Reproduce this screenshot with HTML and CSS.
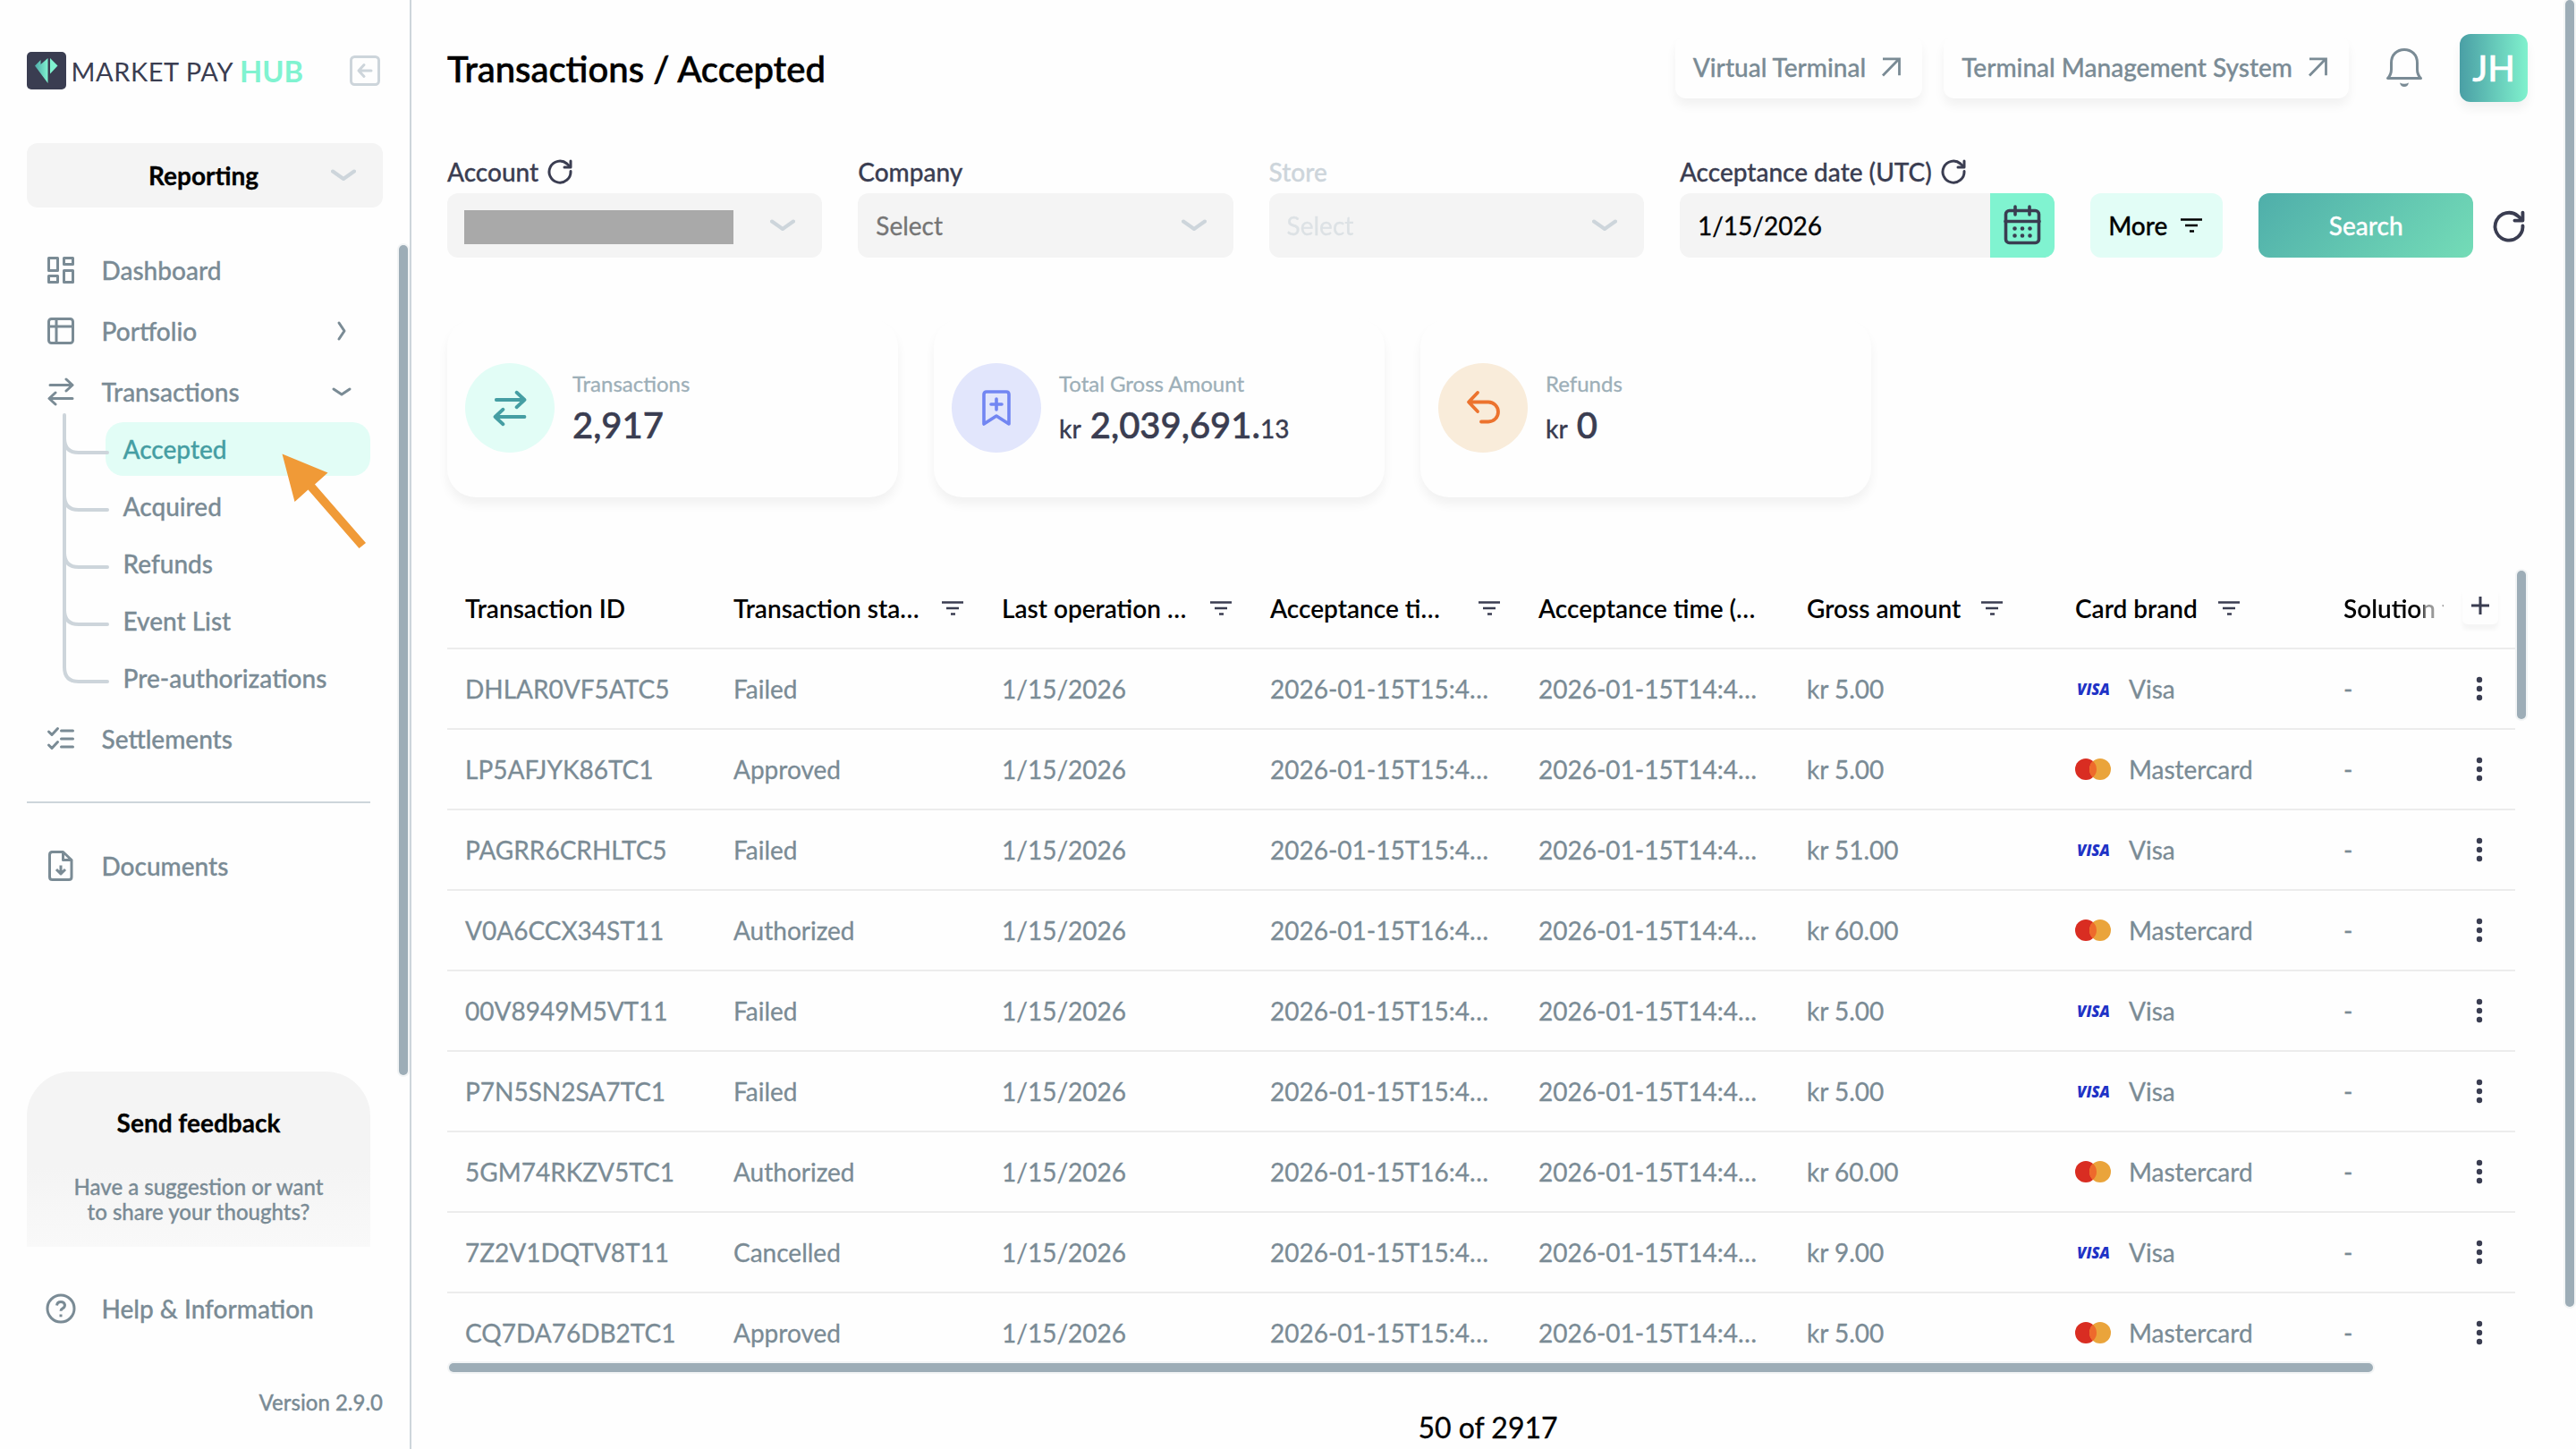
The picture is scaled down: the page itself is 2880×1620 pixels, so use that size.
FILE: index.html
```html
<!DOCTYPE html>
<html lang="en">
<head>
	<meta charset="utf-8">
	<title>Transactions / Accepted</title>
	<link rel="stylesheet" href="styles.css">
</head>
<body>
<!-- shared icons -->
<svg class="sprite" width="0" height="0">
	<symbol id="i-filter" viewBox="0 0 24 18">
		<path d="M0 2.5h24M5 9h14M10 15.5h5" fill="none" stroke="currentColor" stroke-width="2.6"/>
	</symbol>
	<symbol id="i-chevron" viewBox="0 0 28 14">
		<path d="M2 2.5l12 8.5l12-8.5" fill="none" stroke="currentColor" stroke-width="4" stroke-linecap="round" stroke-linejoin="round"/>
	</symbol>
	<symbol id="i-refresh" viewBox="0 0 28 28">
		<path d="M26 13.5A12 12 0 1 1 21.8 5L25.5 8.5" fill="none" stroke="currentColor" stroke-width="3" stroke-linecap="round"/>
		<path d="M26 2v7h-7" fill="none" stroke="currentColor" stroke-width="3" stroke-linecap="round" stroke-linejoin="round"/>
	</symbol>
	<symbol id="i-swap" viewBox="0 0 30 32">
		<path d="M3 8.500h25M21 2l7 6.500l-7 6.500M28 23.500H3M9 17l-7 6.500l7 6.500" fill="none" stroke="currentColor" stroke-width="3" stroke-linecap="round" stroke-linejoin="round"/>
	</symbol>
	<symbol id="i-out" viewBox="0 0 22 22">
		<path d="M2 20.500L20 2M2 1.800h18.500v18.500" fill="none" stroke="currentColor" stroke-width="2.800"/>
	</symbol>
	<symbol id="i-dots" viewBox="0 0 8 28">
		<circle cx="4" cy="4" r="3.200"/><circle cx="4" cy="14" r="3.200"/><circle cx="4" cy="24" r="3.200"/>
	</symbol>
	<symbol id="i-visa" viewBox="0 0 40 24">
		<text x="2" y="18.500" textLength="37" lengthAdjust="spacingAndGlyphs" class="visa-text">VISA</text>
	</symbol>
	<symbol id="i-mc" viewBox="0 0 40 24">
		<circle cx="12" cy="12" r="12" fill="#d92d22"/>
		<circle cx="28" cy="12" r="12" fill="#eaa43b"/>
		<path d="M20 3.060a12 12 0 0 1 0 17.880a12 12 0 0 1 0-17.880z" fill="#ee6a2c"/>
	</symbol>
</svg>

<div class="layout">
	<aside class="sidebar">
		<div class="brand">
			<svg width="312" height="42" viewBox="0 0 312 42">
				<defs>
					<linearGradient id="gem" x1="0" y1="0" x2="1" y2="0">
						<stop offset="0" stop-color="#4fa9a8"/>
						<stop offset="1" stop-color="#80f3d0"/>
					</linearGradient>
				</defs>
				<rect width="44" height="42" rx="5" fill="#3a3d51"/>
				<path d="M9 15.500L15.500 9V14L23.500 7V35z" fill="url(#gem)"/>
				<path d="M26 7L34.500 15.500L26 24.500z" fill="#80f3d0"/>
				<text x="49.500" y="32.500" textLength="181" class="brand-name">MARKET PAY</text>
				<text x="238" y="33.500" textLength="71" lengthAdjust="spacingAndGlyphs" class="brand-hub">HUB</text>
			</svg>
			<svg class="collapse" width="34" height="34" viewBox="0 0 34 34">
				<rect x="1.500" y="1.500" width="31" height="31" rx="4"/>
				<path d="M24 17H10.500M16 10.500L10 17l6 6.500"/>
			</svg>
		</div>
		<div class="switcher">
			<span>Reporting</span>
			<svg width="28" height="14"><use href="#i-chevron"/></svg>
		</div>
		<nav class="nav">
			<a class="nav-item">
				<svg class="icon" width="34" height="34" viewBox="0 0 34 34"><path d="M3.500 3.500h10v14h-10zM20.500 3.500h10v7h-10zM3.500 23.500h10v7h-10zM20.500 17.500h10v13h-10z"/></svg>
				<span>Dashboard</span>
			</a>
			<a class="nav-item">
				<svg class="icon" width="34" height="34" viewBox="0 0 34 34"><rect x="3.500" y="3.500" width="27" height="27" rx="3"/><path d="M3.500 12h27M12 3.500v27"/></svg>
				<span>Portfolio</span>
				<svg class="caret" width="22" height="24" viewBox="0 0 22 24"><path d="M8 3l6 9l-6 9"/></svg>
			</a>
			<a class="nav-item">
				<svg class="icon-swap" width="34" height="32"><use href="#i-swap"/></svg>
				<span>Transactions</span>
				<svg class="caret" width="22" height="24" viewBox="0 0 22 24"><path d="M2 9l9 6l9-6"/></svg>
			</a>
			<div class="subnav">
				<svg class="tree" width="54" height="304" viewBox="0 0 54 304">
					<path d="M4 2V284Q4 300 20 300H52M4 28Q4 44 20 44H52M4 92Q4 108 20 108H52M4 156Q4 172 20 172H52M4 220Q4 236 20 236H52"/>
				</svg>
				<a class="active">Accepted</a>
				<a>Acquired</a>
				<a>Refunds</a>
				<a>Event List</a>
				<a>Pre-authorizations</a>
				<svg class="pointer" width="100" height="112" viewBox="0 0 100 112">
					<path d="M2.500 1.500L53.500 22.500L39 35.500L96 101L88.500 107L31.500 41.500L16.500 55z"/>
				</svg>
			</div>
			<a class="nav-item">
				<svg class="icon" width="34" height="34" viewBox="0 0 34 34"><path d="M17.500 8h13M17.500 17h13M17.500 26h13M3.500 9l3.500 3.500l6.500-7M3.500 24l3.500 3.500l6.500-7" stroke-linecap="round"/></svg>
				<span>Settlements</span>
			</a>
			<hr>
			<a class="nav-item">
				<svg class="icon" width="34" height="34" viewBox="0 0 34 34"><path d="M6.500 1.500h13l9.500 9v19q0 3-3 3H7.500q-3 0-3-3v-25q0-3 3-3zM19.500 2v8.500h9M17 16.500v9M12 21l5 5l5-5"/></svg>
				<span>Documents</span>
			</a>
		</nav>
		<div class="feedback">
			<h3>Send feedback</h3>
			<p>Have a suggestion or want<br>to share your thoughts?</p>
		</div>
		<a class="nav-item help">
			<svg class="icon" width="34" height="34" viewBox="0 0 34 34"><circle cx="17" cy="17" r="15"/><path d="M12.500 13.500q.5-4 4.500-4t4.500 3.500q0 2.500-2.500 3.800q-2 1-2 3"/><path d="M17 23.500v2.800"/></svg>
			<span>Help &amp; Information</span>
		</a>
		<div class="version">Version 2.9.0</div>
		<div class="thumb thumb-side"></div>
	</aside>

	<main class="main">
		<header class="topbar">
			<h1>Transactions / Accepted</h1>
			<a class="link-btn">Virtual Terminal <svg width="22" height="22"><use href="#i-out"/></svg></a>
			<a class="link-btn">Terminal Management System <svg width="22" height="22"><use href="#i-out"/></svg></a>
			<svg class="bell" width="42" height="46" viewBox="0 0 42 46">
				<path d="M2.500 34.500h37q-4-4-4-10v-7C35.500 8 29 2.500 21 2.500S6.500 8 6.500 17.500v7q0 6-4 10z" fill="none" stroke="currentColor" stroke-width="3" stroke-linejoin="round"/>
				<path d="M16 39.500q1 4.500 5 4.500t5-4.500q-5 2.500-10 0z" fill="currentColor"/>
			</svg>
			<div class="avatar">JH</div>
		</header>

		<section class="filters">
			<div class="field">
				<label>Account <svg width="28" height="28"><use href="#i-refresh"/></svg></label>
				<div class="box"><i class="redacted"></i><svg width="28" height="14"><use href="#i-chevron"/></svg></div>
			</div>
			<div class="field">
				<label>Company</label>
				<div class="box"><span class="placeholder">Select</span><svg width="28" height="14"><use href="#i-chevron"/></svg></div>
			</div>
			<div class="field disabled">
				<label>Store</label>
				<div class="box"><span class="placeholder">Select</span><svg width="28" height="14"><use href="#i-chevron"/></svg></div>
			</div>
			<div class="field">
				<label>Acceptance date (UTC) <svg width="28" height="28"><use href="#i-refresh"/></svg></label>
				<div class="box date">
					<span>1/15/2026</span>
					<div class="cal">
						<svg width="42" height="46" viewBox="0 0 42 46">
							<rect x="2.500" y="6.500" width="37" height="36" rx="4" fill="none" stroke="currentColor" stroke-width="3.600"/>
							<path d="M2 18.500h38M13 2v9M29 2v9" fill="none" stroke="currentColor" stroke-width="3.600" stroke-linecap="round"/>
							<path d="M12.500 26.500h.01M21 26.500h.01M29.500 26.500h.01M12.500 34.500h.01M21 34.500h.01M29.500 34.500h.01" stroke="currentColor" stroke-width="4.600" stroke-linecap="round"/>
						</svg>
					</div>
				</div>
			</div>
			<button class="more">More <svg width="24" height="18"><use href="#i-filter"/></svg></button>
			<button class="search">Search</button>
			<svg class="reset" width="36" height="36"><use href="#i-refresh"/></svg>
		</section>

		<section class="cards">
			<div class="card">
				<div class="badge teal"><svg width="38" height="41"><use href="#i-swap"/></svg></div>
				<div><h4>Transactions</h4><p>2,917</p></div>
			</div>
			<div class="card">
				<div class="badge blue">
					<svg width="34" height="42" viewBox="0 0 34 42"><path d="M3 39V6q0-3 3-3h22q3 0 3 3v33l-14-9zM17 11v12M11 17h12" fill="none" stroke="currentColor" stroke-width="3.600" stroke-linecap="round" stroke-linejoin="round"/></svg>
				</div>
				<div><h4>Total Gross Amount</h4><p><small>kr</small> 2,039,691.<small>13</small></p></div>
			</div>
			<div class="card">
				<div class="badge orange">
					<svg width="40" height="40" viewBox="0 0 40 40"><path d="M14 3L4 13.500L14 24M5 13.500H26a10.500 10.500 0 0 1 0 22H18" fill="none" stroke="currentColor" stroke-width="3.800" stroke-linecap="round" stroke-linejoin="round"/></svg>
				</div>
				<div><h4>Refunds</h4><p><small>kr</small> 0</p></div>
			</div>
		</section>

		<section class="table">
			<div class="row head">
				<div>Transaction ID</div>
				<div><span class="cut">Transaction sta…</span><svg width="24" height="18"><use href="#i-filter"/></svg></div>
				<div><span class="cut">Last operation …</span><svg width="24" height="18"><use href="#i-filter"/></svg></div>
				<div><span class="cut">Acceptance ti…</span><svg width="24" height="18"><use href="#i-filter"/></svg></div>
				<div>Acceptance time (…</div>
				<div><span>Gross amount</span><svg width="24" height="18"><use href="#i-filter"/></svg></div>
				<div><span>Card brand</span><svg width="24" height="18"><use href="#i-filter"/></svg></div>
				<div class="fade">Solution t</div>
				<div class="act"><button class="add"><svg width="22" height="22" viewBox="0 0 22 22"><path d="M11 1v20M1 11h20" stroke="currentColor" stroke-width="3"/></svg></button></div>
			</div>
			<div class="row">
				<div>DHLAR0VF5ATC5</div><div>Failed</div><div>1/15/2026</div><div>2026-01-15T15:4…</div><div>2026-01-15T14:4…</div><div>kr 5.00</div>
				<div class="pay"><svg width="40" height="24"><use href="#i-visa"/></svg>Visa</div><div>-</div>
				<div class="act"><svg width="8" height="28"><use href="#i-dots"/></svg></div>
			</div>
			<div class="row">
				<div>LP5AFJYK86TC1</div><div>Approved</div><div>1/15/2026</div><div>2026-01-15T15:4…</div><div>2026-01-15T14:4…</div><div>kr 5.00</div>
				<div class="pay"><svg width="40" height="24"><use href="#i-mc"/></svg>Mastercard</div><div>-</div>
				<div class="act"><svg width="8" height="28"><use href="#i-dots"/></svg></div>
			</div>
			<div class="row">
				<div>PAGRR6CRHLTC5</div><div>Failed</div><div>1/15/2026</div><div>2026-01-15T15:4…</div><div>2026-01-15T14:4…</div><div>kr 51.00</div>
				<div class="pay"><svg width="40" height="24"><use href="#i-visa"/></svg>Visa</div><div>-</div>
				<div class="act"><svg width="8" height="28"><use href="#i-dots"/></svg></div>
			</div>
			<div class="row">
				<div>V0A6CCX34ST11</div><div>Authorized</div><div>1/15/2026</div><div>2026-01-15T16:4…</div><div>2026-01-15T14:4…</div><div>kr 60.00</div>
				<div class="pay"><svg width="40" height="24"><use href="#i-mc"/></svg>Mastercard</div><div>-</div>
				<div class="act"><svg width="8" height="28"><use href="#i-dots"/></svg></div>
			</div>
			<div class="row">
				<div>00V8949M5VT11</div><div>Failed</div><div>1/15/2026</div><div>2026-01-15T15:4…</div><div>2026-01-15T14:4…</div><div>kr 5.00</div>
				<div class="pay"><svg width="40" height="24"><use href="#i-visa"/></svg>Visa</div><div>-</div>
				<div class="act"><svg width="8" height="28"><use href="#i-dots"/></svg></div>
			</div>
			<div class="row">
				<div>P7N5SN2SA7TC1</div><div>Failed</div><div>1/15/2026</div><div>2026-01-15T15:4…</div><div>2026-01-15T14:4…</div><div>kr 5.00</div>
				<div class="pay"><svg width="40" height="24"><use href="#i-visa"/></svg>Visa</div><div>-</div>
				<div class="act"><svg width="8" height="28"><use href="#i-dots"/></svg></div>
			</div>
			<div class="row">
				<div>5GM74RKZV5TC1</div><div>Authorized</div><div>1/15/2026</div><div>2026-01-15T16:4…</div><div>2026-01-15T14:4…</div><div>kr 60.00</div>
				<div class="pay"><svg width="40" height="24"><use href="#i-mc"/></svg>Mastercard</div><div>-</div>
				<div class="act"><svg width="8" height="28"><use href="#i-dots"/></svg></div>
			</div>
			<div class="row">
				<div>7Z2V1DQTV8T11</div><div>Cancelled</div><div>1/15/2026</div><div>2026-01-15T15:4…</div><div>2026-01-15T14:4…</div><div>kr 9.00</div>
				<div class="pay"><svg width="40" height="24"><use href="#i-visa"/></svg>Visa</div><div>-</div>
				<div class="act"><svg width="8" height="28"><use href="#i-dots"/></svg></div>
			</div>
			<div class="row">
				<div>CQ7DA76DB2TC1</div><div>Approved</div><div>1/15/2026</div><div>2026-01-15T15:4…</div><div>2026-01-15T14:4…</div><div>kr 5.00</div>
				<div class="pay"><svg width="40" height="24"><use href="#i-mc"/></svg>Mastercard</div><div>-</div>
				<div class="act"><svg width="8" height="28"><use href="#i-dots"/></svg></div>
			</div>
			<div class="thumb thumb-v"></div>
			<div class="thumb thumb-h"></div>
		</section>
		<div class="count">50 of 2917</div>
		<div class="thumb thumb-page"></div>
	</main>
</div>
</body>
</html>
```
FILE: styles.css
```css
* {
	box-sizing: border-box;
	margin: 0;
	padding: 0;
}
body {
	width: 2880px;
	height: 1620px;
	overflow: hidden;
	background: #fefefe;
	color: #7a8b95;
	font-family: Lato, "Open Sans", sans-serif;
	font-size: 28px;
	font-weight: 500;
	line-height: 36px;
	-webkit-text-stroke: .3px;
}
svg {
	display: block;
	flex: none;
	-webkit-text-stroke: 0;
}
.sprite {
	display: none;
}
.layout {
	display: flex;
	height: 1620px;
}

/* sidebar */
.sidebar {
	position: relative;
	width: 460px;
	flex: none;
	padding: 58px 30px 0;
	border-right: 2px solid #cdd5db;
}
.brand {
	display: flex;
	justify-content: space-between;
	height: 42px;
	padding-right: 3px;
}
.brand-name {
	font-size: 29px;
	font-weight: 400;
	fill: #3a3d51;
}
.brand-hub {
	font-size: 32px;
	font-weight: 700;
	fill: #80f3d0;
}
.collapse {
	margin-top: 4px;
	fill: none;
	stroke: #cdd5db;
	stroke-width: 3;
	stroke-linecap: round;
	stroke-linejoin: round;
}
.switcher {
	display: flex;
	align-items: center;
	height: 72px;
	margin-top: 60px;
	padding-right: 30px;
	border-radius: 12px;
	background: #f4f4f4;
	color: #cdd5db;
}
.switcher span {
	flex: 1;
	padding-left: 55px;
	text-align: center;
	font-weight: 700;
	color: #000;
}
.nav {
	margin-top: 36px;
	width: 384px;
}
.nav-item {
	display: flex;
	align-items: center;
	height: 68px;
	padding-left: 21px;
}
.nav-item span {
	flex: 1;
	padding-left: 28.5px;
}
.icon {
	fill: none;
	stroke: #7a8b95;
	stroke-width: 3;
	stroke-linejoin: round;
}
.caret {
	margin-right: 21px;
	fill: none;
	stroke: #7a8b95;
	stroke-width: 3;
	stroke-linecap: round;
	stroke-linejoin: round;
}
.subnav {
	position: relative;
	padding-left: 88px;
}
.subnav a {
	display: block;
	height: 60px;
	margin-bottom: 4px;
	padding-left: 19.5px;
	border-radius: 20px;
	line-height: 60px;
}
.subnav .active {
	background: #e2fdf6;
	color: #459ea3;
}
.tree {
	position: absolute;
	left: 38px;
	top: -10px;
	fill: none;
	stroke: #cdd5db;
	stroke-width: 4;
	stroke-linecap: round;
}
.pointer {
	position: absolute;
	left: 283px;
	top: 34px;
	fill: #f09a37;
}
.nav hr {
	height: 2px;
	margin: 36px 0;
	border: 0;
	background: #cdd5db;
}
.feedback {
	width: 384px;
	height: 196px;
	margin-top: 196px;
	padding-top: 39px;
	border-radius: 50px 50px 0 0;
	background: linear-gradient(#f4f4f4 55%, #f9f9f9);
	text-align: center;
}
.feedback h3 {
	font-size: 28px;
	font-weight: 700;
	color: #000;
}
.feedback p {
	margin-top: 40px;
	font-size: 24px;
	line-height: 28px;
}
.help {
	margin-top: 35px;
}
.version {
	margin-top: 53px;
	text-align: right;
	font-size: 24px;
}

/* scrollbar thumbs */
.thumb {
	position: absolute;
	width: 10px;
	border-radius: 5px;
	background: #9dadb7;
	box-shadow: 0 0 0 2px #f2f4f5;
}
.thumb-side {
	left: 446px;
	top: 274px;
	height: 928px;
}
.thumb-page {
	right: 2px;
	top: 0;
	height: 1461px;
}
.thumb-v {
	right: -12px;
	top: 2px;
	height: 166px;
}
.thumb-h {
	left: 2px;
	bottom: 0;
	width: 2151px;
	height: 10px;
}

/* top bar */
.main {
	position: relative;
	flex: 1;
	padding: 38px 53px 0 40px;
}
.topbar {
	display: flex;
	align-items: center;
	height: 76px;
	margin-right: 1px;
}
.topbar h1 {
	flex: 1;
	padding-top: 2px;
	font-size: 40px;
	font-weight: 500;
	color: #000;
	-webkit-text-stroke: .6px;
}
.link-btn {
	display: flex;
	align-items: center;
	gap: 17px;
	height: 70px;
	margin: -2px 24px 0 0;
	padding: 0 24px 0 20px;
	border-radius: 12px;
	background: #fefefe;
	box-shadow: 0 8px 12px rgba(0, 0, 0, .05);
}
.bell {
	margin-left: 17px;
}
.avatar {
	width: 76px;
	height: 76px;
	margin-left: 41px;
	border-radius: 12px;
	background: linear-gradient(90deg, #4a9fa5, #80f1cd);
	box-shadow: 0 8px 12px rgba(0, 0, 0, .05);
	font-size: 40px;
	line-height: 77px;
	text-align: center;
	color: #fff;
	-webkit-text-stroke: .6px;
}

/* filters */
.filters {
	display: flex;
	align-items: flex-end;
	gap: 40px;
	height: 116px;
	margin-top: 58px;
}
.field {
	width: 419.3px;
	color: #3a3d51;
}
.field label {
	display: flex;
	align-items: center;
	gap: 10px;
	height: 40px;
	margin-bottom: 4px;
	padding-bottom: 1px;
}
.box {
	display: flex;
	align-items: center;
	justify-content: space-between;
	height: 72px;
	padding: 0 30px 0 20px;
	border-radius: 12px;
	background: #f4f4f4;
	color: #cdd5db;
	font-weight: 400;
	overflow: hidden;
}
.redacted {
	width: 301px;
	height: 38px;
	margin: 4px 0 0 -1px;
	background: #a9a9a9;
}
.placeholder {
	color: #757575;
}
.disabled,
.disabled .placeholder {
	color: #cdd5db;
}
.disabled .placeholder {
	opacity: .6;
}
.date {
	padding-right: 0;
	color: #000;
}
.cal {
	display: flex;
	align-items: center;
	justify-content: center;
	width: 72px;
	height: 72px;
	background: #80f3d0;
	color: #3a3d51;
}
button {
	border: 0;
	border-radius: 12px;
	font: inherit;
}
.more {
	display: flex;
	align-items: center;
	gap: 15px;
	width: 148px;
	height: 72px;
	padding-left: 20px;
	background: #e2fdf6;
	color: #000;
}
.search {
	width: 240px;
	height: 72px;
	background: linear-gradient(135deg, #4faeaa, #74dcb7);
	color: #fff;
}
.reset {
	margin: 0 0 17px -18px;
	color: #3a3d51;
}

/* summary cards */
.cards {
	display: flex;
	gap: 40px;
	margin-top: 68px;
}
.card {
	display: flex;
	align-items: center;
	gap: 20px;
	width: 504px;
	height: 200px;
	padding-left: 20px;
	border-radius: 32px;
	background: #fefefe;
	box-shadow: 0 8px 12px rgba(0, 0, 0, .05);
}
.badge {
	display: flex;
	align-items: center;
	justify-content: center;
	width: 100px;
	height: 100px;
	border-radius: 50%;
}
.teal {
	background: #e2fdf6;
	color: #459ea3;
}
.blue {
	background: #e2e6fc;
	color: #7286f2;
}
.orange {
	background: #f9ecda;
	color: #ec732e;
}
.card h4 {
	font-size: 24px;
	font-weight: 400;
	line-height: 36px;
	color: #9dafb8;
}
.card p {
	height: 50px;
	margin-top: 4px;
	font-size: 40px;
	line-height: 48px;
	color: #3a3d51;
	-webkit-text-stroke: .6px;
}
.card small {
	font-size: 28px;
	line-height: 1;
	-webkit-text-stroke: .3px;
}

/* table */
.table {
	position: relative;
	width: 2312px;
	height: 898px;
	margin-top: 80px;
}
.row {
	display: grid;
	grid-template-columns: repeat(7, 300px) 132px 80px;
	height: 90px;
	border-bottom: 2px solid #ececec;
	font-weight: 400;
}
.row:nth-child(10) {
	height: 78px;
	border-bottom: 0;
}
.row > div {
	display: flex;
	align-items: center;
	height: 88px;
	padding-left: 20px;
	white-space: nowrap;
}
.head {
	font-weight: 600;
	color: #000;
	-webkit-text-stroke: 0;
}
.head svg {
	margin-left: 23px;
	color: #3a3d51;
}
.cut {
	width: 210px;
}
.row .fade {
	overflow: hidden;
	-webkit-mask-image: linear-gradient(90deg, #000 108px, rgba(0, 0, 0, .4) 112px);
	mask-image: linear-gradient(90deg, #000 108px, rgba(0, 0, 0, .4) 112px);
}
.pay svg {
	margin-right: 20px;
}
.visa-text {
	font-family: "Open Sans", sans-serif;
	font-size: 18px;
	font-weight: 800;
	font-style: italic;
	fill: #1f33c6;
}
.row .act {
	padding-left: 36px;
	color: #3a3d51;
}
.act svg {
	fill: #3a3d51;
}
.head .act {
	padding-left: 21px;
}
.add {
	display: flex;
	align-items: center;
	justify-content: center;
	width: 40px;
	height: 42px;
	margin-top: -6px;
	border-radius: 6px;
	background: #fefefe;
	color: #3a3d51;
	box-shadow: 0 6px 5px rgba(0, 0, 0, .04);
}
.add svg {
	margin: 0;
}
.count {
	margin-top: 44px;
	text-align: center;
	font-size: 32px;
	font-weight: 400;
	color: #000;
}
```
